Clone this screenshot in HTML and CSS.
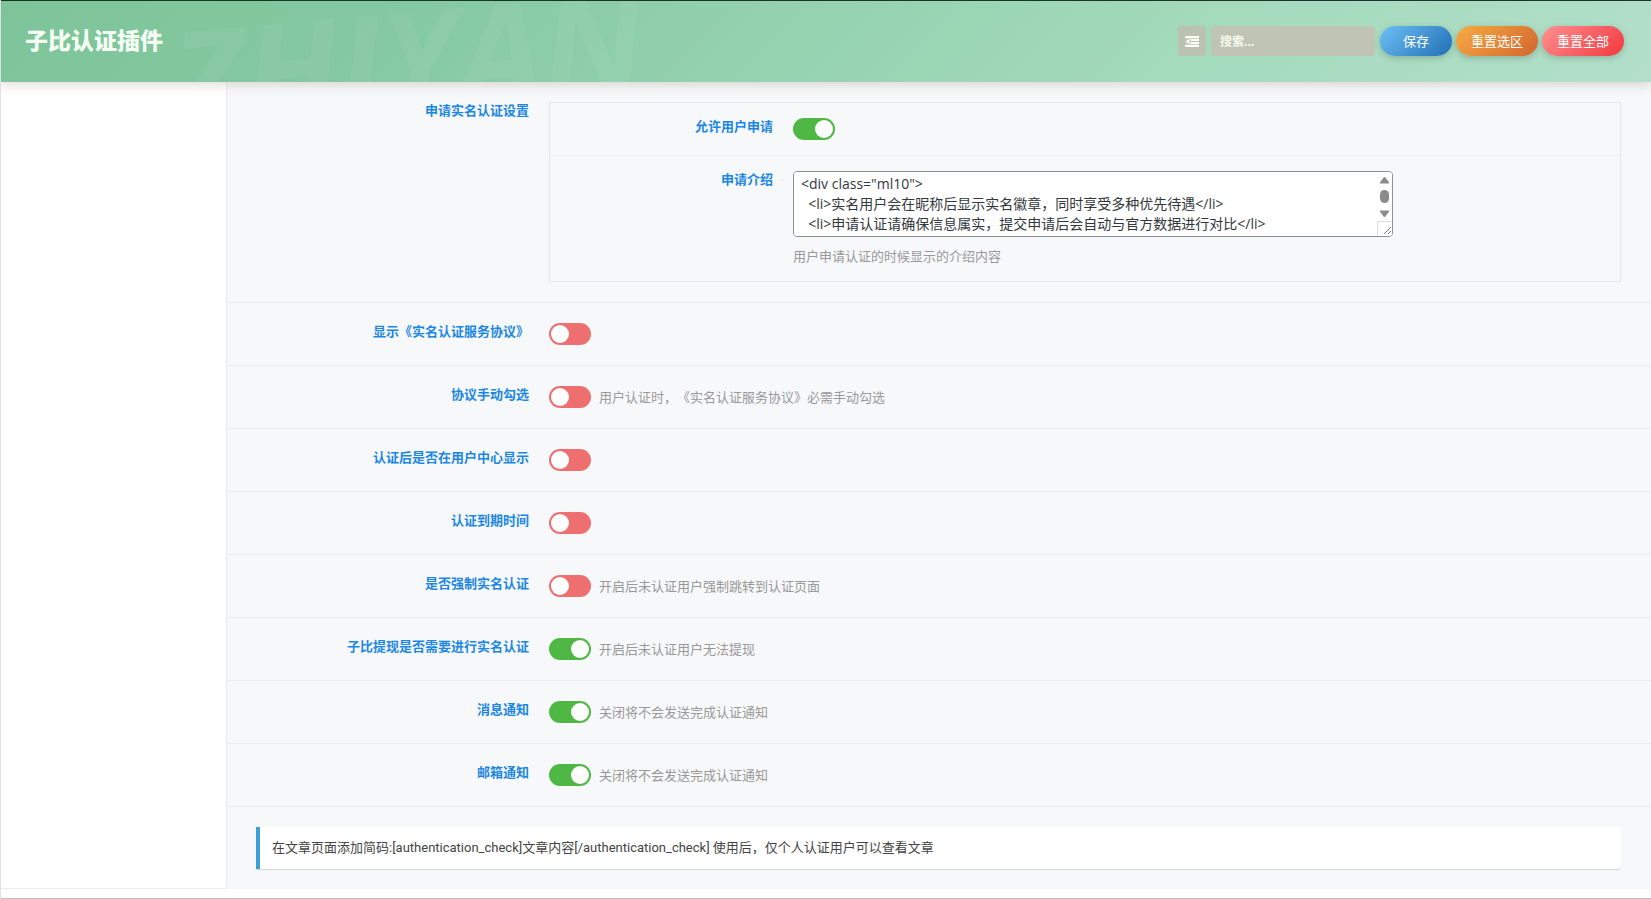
FILE: index.html
```html
<!DOCTYPE html>
<html lang="zh-CN">
<head>
    <meta charset="UTF-8">
    <meta name="viewport" content="width=device-width, initial-scale=1.0">
    <title>子比认证插件</title>
    <link rel="stylesheet" href="styles.css">
</head>
<body>

<header class="header">
    <div class="watermark" aria-hidden="true"><span>ZHIYAN</span></div>
    <h1>子比认证插件</h1>
    <div class="tools">
        <button type="button" class="expand" aria-label="展开全部">
            <svg width="14" height="11" viewBox="0 0 14 11" fill="currentColor">
                <path d="M0 0h14v2.300H0zM5.500 2.900h8.500v2.200H5.500zM5.500 5.900h8.500v2.200H5.500zM0 8.700h14v2.300H0zM4.500 2.700v5.600L0.500 5.500z"/>
            </svg>
        </button>
        <input type="text" class="search" placeholder="搜索..." aria-label="搜索">
        <div class="buttons">
            <button type="button" class="btn save">保存</button>
            <button type="button" class="btn reset">重置选区</button>
            <button type="button" class="btn reset-all">重置全部</button>
        </div>
    </div>
</header>

<div class="wrapper">
    <nav class="sidebar"></nav>

    <main class="content">
        <!-- 申请设置 -->
        <div class="field">
            <div class="title">申请实名认证设置</div>
            <div class="fieldset panel">
                <div class="field">
                    <label class="title" for="allow">允许用户申请</label>
                    <div class="fieldset"><input type="checkbox" class="switch" id="allow" checked></div>
                </div>
                <div class="field">
                    <label class="title" for="intro">申请介绍</label>
                    <div class="fieldset column">
                        <div class="textbox">
                            <textarea id="intro" spellcheck="false">&lt;div class="ml10"&gt;
  &lt;li&gt;实名用户会在昵称后显示实名徽章，同时享受多种优先待遇&lt;/li&gt;
  &lt;li&gt;申请认证请确保信息属实，提交申请后会自动与官方数据进行对比&lt;/li&gt;
&lt;/div&gt;</textarea>
                            <svg class="scroll" width="15" height="64" viewBox="0 0 15 64" aria-hidden="true">
                                <path d="M7.500 5L12 11H3zM3 39h9L7.500 45z" fill="#8b8b8b" stroke="#8b8b8b" stroke-linejoin="round"/>
                                <rect x="3" y="18" width="9" height="13" rx="4.500" fill="#8b8b8b"/>
                                <path d="M0.500 64V49.500H15" fill="none" stroke="#dcdcdc"/>
                                <path d="M7 62l7-7M11 62l3-3" stroke="#777"/>
                            </svg>
                        </div>
                        <p class="help">用户申请认证的时候显示的介绍内容</p>
                    </div>
                </div>
            </div>
        </div>

        <!-- 开关选项 -->
        <div class="field">
            <label class="title" for="agreement">显示《实名认证服务协议》</label>
            <div class="fieldset"><input type="checkbox" class="switch" id="agreement"></div>
        </div>
        <div class="field">
            <label class="title" for="manual">协议手动勾选</label>
            <div class="fieldset">
                <input type="checkbox" class="switch" id="manual">
                <span class="help">用户认证时，《实名认证服务协议》必需手动勾选</span>
            </div>
        </div>
        <div class="field">
            <label class="title" for="center">认证后是否在用户中心显示</label>
            <div class="fieldset"><input type="checkbox" class="switch" id="center"></div>
        </div>
        <div class="field">
            <label class="title" for="expire">认证到期时间</label>
            <div class="fieldset"><input type="checkbox" class="switch" id="expire"></div>
        </div>
        <div class="field">
            <label class="title" for="force">是否强制实名认证</label>
            <div class="fieldset">
                <input type="checkbox" class="switch" id="force">
                <span class="help">开启后未认证用户强制跳转到认证页面</span>
            </div>
        </div>
        <div class="field">
            <label class="title" for="withdraw">子比提现是否需要进行实名认证</label>
            <div class="fieldset">
                <input type="checkbox" class="switch" id="withdraw" checked>
                <span class="help">开启后未认证用户无法提现</span>
            </div>
        </div>
        <div class="field">
            <label class="title" for="message">消息通知</label>
            <div class="fieldset">
                <input type="checkbox" class="switch" id="message" checked>
                <span class="help">关闭将不会发送完成认证通知</span>
            </div>
        </div>
        <div class="field">
            <label class="title" for="email">邮箱通知</label>
            <div class="fieldset">
                <input type="checkbox" class="switch" id="email" checked>
                <span class="help">关闭将不会发送完成认证通知</span>
            </div>
        </div>

        <!-- 简码说明 -->
        <div class="field">
            <div class="notice">在文章页面添加简码:[authentication_check]文章内容[/authentication_check] 使用后，仅个人认证用户可以查看文章</div>
        </div>
    </main>
</div>

<footer class="footer"></footer>

</body>
</html>
```
FILE: styles.css
```css
* {
    box-sizing: border-box;
}
body {
    margin: 0;
    min-height: 100vh;
    display: flex;
    flex-direction: column;
    background-color: #fff;
    border-left: 1px solid #dfe1e6;
    font-family: "Open Sans", "Noto Sans CJK SC", sans-serif;
    font-size: 13px;
    line-height: 18px;
    text-spacing-trim: space-all;
    color: #444;
}
button, input, textarea {
    font-family: inherit;
    margin: 0;
}

/* 顶部 */
.header {
    position: relative;
    z-index: 1;
    display: flex;
    align-items: center;
    justify-content: space-between;
    height: 82px;
    padding: 0 27px 1px 24px;
    border-top: 1px solid #1d3528;
    background: linear-gradient(135deg, #7ec49a 0%, #84c9a1 25%, #93d1af 45%, #a2dabb 70%, #b3dfcb 100%);
    box-shadow: 0 2px 12px rgba(90, 70, 40, 0.22);
}
.header h1 {
    position: relative;
    margin: 0;
    padding-bottom: 2px;
    font-size: 23px;
    line-height: 32px;
    font-weight: 900;
    color: #f6fff4;
}
.watermark {
    position: absolute;
    left: 0;
    top: 0;
    width: 800px;
    height: 81px;
    overflow: hidden;
    padding-left: 170px;
    font-size: 135px;
    line-height: 112px;
    font-weight: bold;
    font-style: italic;
    color: rgba(255, 255, 255, 0.05);
}
.watermark span {
    display: inline-block;
    transform: rotate(-5deg);
}
.tools {
    position: relative;
    display: flex;
    align-items: center;
    gap: 5px;
}
.expand {
    display: flex;
    align-items: center;
    justify-content: center;
    width: 28px;
    height: 30px;
    padding: 0;
    border: none;
    border-radius: 3px;
    background-color: #bcc2b1;
    color: #fcfff5;
    cursor: pointer;
}
.search {
    width: 164px;
    height: 30px;
    padding: 0 9px;
    border: none;
    border-radius: 3px;
    background-color: #c0c4b4;
    font-size: 12px;
    color: #fff;
}
.search::placeholder {
    color: #f7faef;
    font-weight: bold;
}
.buttons {
    display: flex;
    gap: 4px;
}
.btn {
    height: 30px;
    padding: 0 15px;
    border: none;
    border-radius: 15px;
    font-size: 13px;
    line-height: 30px;
    color: #fff;
    box-shadow: 0 2px 6px rgba(60, 80, 60, 0.3);
    cursor: pointer;
}
.save {
    padding: 0 23px;
    background: linear-gradient(135deg, #6cc0f4, #226fb6);
}
.reset {
    background: linear-gradient(135deg, #f5ab42, #d3662f);
}
.reset-all {
    background: linear-gradient(135deg, #fd9090, #f3383f);
}

/* 主体 */
.wrapper {
    display: flex;
}
.sidebar {
    width: 226px;
    flex-shrink: 0;
    border-right: 1px solid #e9eaed;
    border-bottom: 1px solid #ececef;
}
.content {
    flex: 1;
    min-width: 0;
    background-color: #f7f8fa;
}
.field {
    display: flex;
    align-items: flex-start;
    padding: 20px 30px 20px 29px;
    border-bottom: 1px solid #ebecee;
}
.field:last-child {
    border-bottom: none;
}
.title {
    width: 20%;
    flex-shrink: 0;
    text-align: right;
    font-weight: bold;
    line-height: 16px;
    color: #1c87e3;
}
.fieldset {
    display: flex;
    align-items: center;
    flex: 1;
    min-width: 0;
    margin-left: 20px;
    gap: 8px;
}
.panel {
    display: block;
    border: 1px solid #e3e5e8;
}
.panel .field {
    padding: 15px;
    border-color: #f0f1f3;
}
.column {
    flex-direction: column;
    align-items: flex-start;
    gap: 9px;
}
.help {
    margin: 0;
    line-height: 20px;
    color: #999;
}

/* 开关 */
.switch {
    appearance: none;
    width: 42px;
    height: 22px;
    padding: 2px;
    border-radius: 11px;
    background-color: #ed6f6f;
    cursor: pointer;
}
.switch::before {
    content: "";
    display: block;
    width: 18px;
    height: 18px;
    border-radius: 50%;
    background-color: #fff;
}
.switch:checked {
    background-color: #4fb845;
}
.switch:checked::before {
    margin-left: auto;
}

/* 文本框 */
.textbox {
    position: relative;
    width: 600px;
    max-width: 100%;
}
textarea {
    display: block;
    width: 100%;
    height: 66px;
    padding: 2px 7px;
    border: 1px solid #8c8f94;
    border-radius: 4px;
    background-color: #fff;
    font-size: 14px;
    line-height: 20px;
    color: #32373c;
    resize: none;
    overflow-y: auto;
    scrollbar-width: none;
}
.scroll {
    position: absolute;
    top: 1px;
    right: 1px;
    pointer-events: none;
}

.notice {
    flex: 1;
    padding: 12px;
    border-left: 4px solid #3d9fd3;
    border-radius: 0 3px 3px 0;
    background-color: #fff;
    box-shadow: 0 1px 1px rgba(0, 0, 0, 0.15);
    font-family: Roboto, "Noto Sans CJK SC", sans-serif;
}
.footer {
    flex: 1;
    min-height: 9px;
    border-bottom: 1px solid #b9bfbe;
}
```
